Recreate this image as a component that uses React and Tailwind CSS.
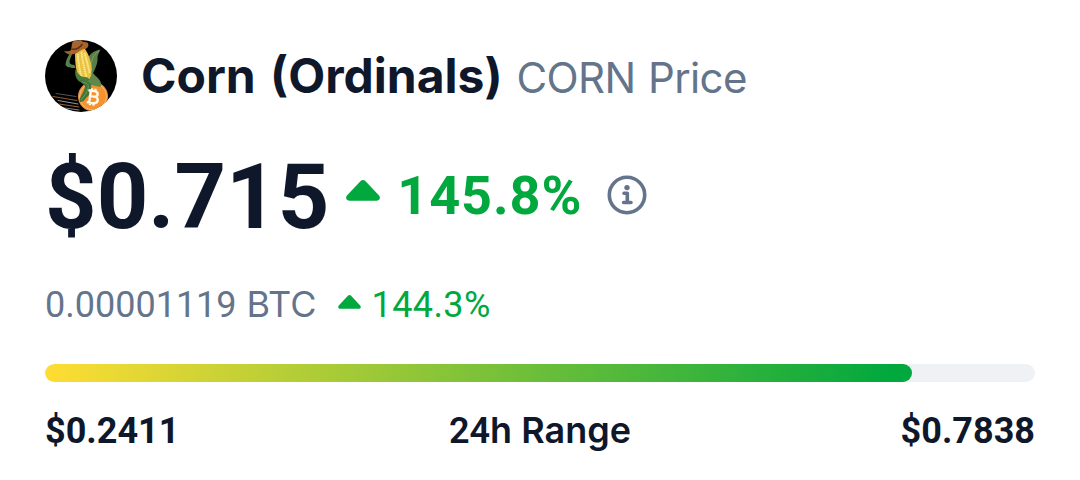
import React from 'react';

const coin = {
  name: 'Corn (Ordinals)',
  symbol: 'CORN',
  price: '$0.715',
  change: '145.8%',
  btcPrice: '0.00001119',
  btcChange: '144.3%',
  low: '$0.2411',
  high: '$0.7838',
  rangePercent: 87.6,
};

// Figures are set in Roboto, words in Inter
const Num = ({ children }) => <span className="font-[Roboto,sans-serif]">{children}</span>;

const CaretUp = ({ className }) => (
  <svg viewBox="0 0 34 21" className={className} fill="currentColor" aria-hidden="true">
    <path d="M14.6 1.1a3.8 3.8 0 0 1 4.8 0L33 15.6c1.8 2 .8 5.1-2.2 5.1H3.2C.2 20.7-.8 17.6 1 15.6Z" />
  </svg>
);

const InfoIcon = () => (
  <svg viewBox="0 0 40 40" className="h-10 w-10" fill="none" stroke="currentColor" aria-hidden="true">
    <circle cx="20" cy="20" r="17.7" strokeWidth="3.6" />
    <circle cx="20" cy="12.6" r="2.7" fill="currentColor" stroke="none" />
    <path d="M17 18.3h3.3v9.1M16.6 27.5h7.4" strokeWidth="3.6" strokeLinecap="round" strokeLinejoin="round" />
  </svg>
);

const CornLogo = () => (
  <svg viewBox="0 0 72 72" className="h-[72px] w-[72px] rounded-full" aria-hidden="true">
    <rect width="72" height="72" fill="#000" />
    <g fill="none" strokeLinecap="round">
      <path d="M11 53.5l20 3" stroke="#6a6a6a" strokeWidth="0.8" />
      <path d="M8 56.5l24 4" stroke="#8b5a35" strokeWidth="1.1" />
      <path d="M13 60.5l20 3.5" stroke="#a8a8a8" strokeWidth="0.9" />
      <path d="M14 64l20 3" stroke="#96603a" strokeWidth="1.1" />
      <path d="M20 68l14 2" stroke="#999" strokeWidth="0.9" />
    </g>
    <circle cx="48" cy="56.5" r="15" fill="#e9953f" />
    <circle cx="48" cy="56.5" r="13.3" fill="none" stroke="#fbd19b" strokeWidth="0.7" />
    <circle cx="48" cy="56.5" r="12.7" fill="#f7932c" />
    <path d="M27 14h-2.5c-2 3-4 7-4 11 2 3 6 3 10 3l-1-3c-3 0-5-1-5-3 0-3 2-5 2.5-8Z" fill="#58804a" />
    <path d="M55.5 9.5c-6 1-11 4-12.500 9l1.500 15 3 1c1-3 6-11 5-17 0-3 2-5 3-8Z" fill="#587f45" />
    <path d="M54 10.5c-5 4-8 8-8 18" fill="none" stroke="#88a66f" strokeWidth="0.8" />
    <path d="M30 14c0 9 1 18 4 26l9 2 4-7c0-10-2-19-7-26-3-2-8 1-10 5Z" fill="#e9c244" />
    <path d="M33 14c0 8 2 18 4 24M36.5 12c1 9 3 18 5 25M39.5 13c2 7 4 14 5 20" fill="none" stroke="#faec93" strokeWidth="1.8" strokeDasharray="1.6 0.5" />
    <path d="M30.5 29c-1 5 0 9 3 12 4 2 7 4 10 4l2-3c-1-4-3-5-7-5-4-1-6-4-8-8Z" fill="#4a7d3b" />
    <path d="M46.5 30c1 4 5 6 8 10 2 3 2 5 1 7-5-1-11-2-14-5 4-2 5-6 5-12Z" fill="#5f894b" />
    <path d="M34 40c4 0 9 1 12 4 1 6-1 11-5 14-2 3-4 4-6 4-1-2 0-4 1-6 2-4 4-7 4-10Z" fill="#42753a" />
    <path d="M37 42c5 1 7 2 6 6-1 5-4 8-7 12" fill="none" stroke="#6e9c58" strokeWidth="1" />
    <path d="M19 11c2 3 6 4 10 3 4-1 6-4 10-5 4 0 5-4 4-6-1-1-3-1-5-1-2-3-4-2-6-1-2-1-5 0-5 3l-1 6c-2 2-5 1-7 1Z" fill="#a8642c" />
    <path d="M26.5 9c4 1 8-1 11-5" fill="none" stroke="#5c3013" strokeWidth="1.4" />
    <g transform="rotate(8 48 57)" fill="none" stroke="#fff7ea" strokeWidth="2.4">
      <path d="M45 51v12M42.5 51h6c5 0 5 5.5 0 5.5h-3M45 56.5h4c5.5 0 5.5 6.5 0 6.5h-6.500M46 48.5v3M49.5 48.5v3M46 62.5v3M49.5 62.5v3" />
    </g>
  </svg>
);

const App = () => {
  return (
    <main className="h-[480px] w-[1080px] bg-white px-[45px] pt-10 font-[Inter,sans-serif] text-slate-900">
      <div className="flex h-[72px] items-center">
        <CornLogo />
        <h1 className="ml-6 flex items-baseline whitespace-nowrap">
          <span className="text-[48px] leading-[72px] font-bold [word-spacing:3px]">{coin.name}</span>
          <span className="ml-[14px] text-[42px] leading-[60px] font-normal tracking-[-0.65px] text-[#64748b] [word-spacing:1.5px]">
            {coin.symbol} Price
          </span>
        </h1>
      </div>

      <div className="mt-[28px] flex h-[108px] items-center font-bold">
        <span className="pt-[6px] text-[90px] leading-[108px]"><Num>{coin.price}</Num></span>
        <div className="ml-[17px] flex items-center text-[#00a83e]">
          <CaretUp className="mb-2 h-[21px] w-[34px]" />
          <span className="ml-[17px] pt-[2px] text-[54px] leading-[84px] tracking-[0.9px]"><Num>{coin.change}</Num></span>
        </div>
        <span className="ml-[25px] pt-px text-[#64748b]">
          <InfoIcon />
        </span>
      </div>

      <div className="mt-[29px] flex h-[54px] items-center text-[36px] leading-[54px]">
        <span className="text-[#64748b] [word-spacing:1px]"><Num>{coin.btcPrice} </Num>BTC</span>
        <div className="ml-[21px] flex items-center text-[#00a83e]">
          <CaretUp className="mb-1 h-[14px] w-[23px]" />
          <span className="ml-[11px] tracking-[0.4px]"><Num>{coin.btcChange}</Num></span>
        </div>
      </div>

      <div className="mt-[33px] h-[18px] overflow-hidden rounded-full bg-[#eff2f5]">
        <div
          className="h-full rounded-full bg-[linear-gradient(92deg,#ffdd33_0%,#00a83e_98%)]"
          style={{ width: `${coin.rangePercent}%` }}
        />
      </div>

      <div className="mt-[21px] flex items-baseline justify-between text-[36px] leading-[54px] font-semibold">
        <span className="font-bold"><Num>{coin.low}</Num></span>
        <span><Num>24</Num>h Range</span>
        <span className="font-bold"><Num>{coin.high}</Num></span>
      </div>
    </main>
  );
};

export default App;
